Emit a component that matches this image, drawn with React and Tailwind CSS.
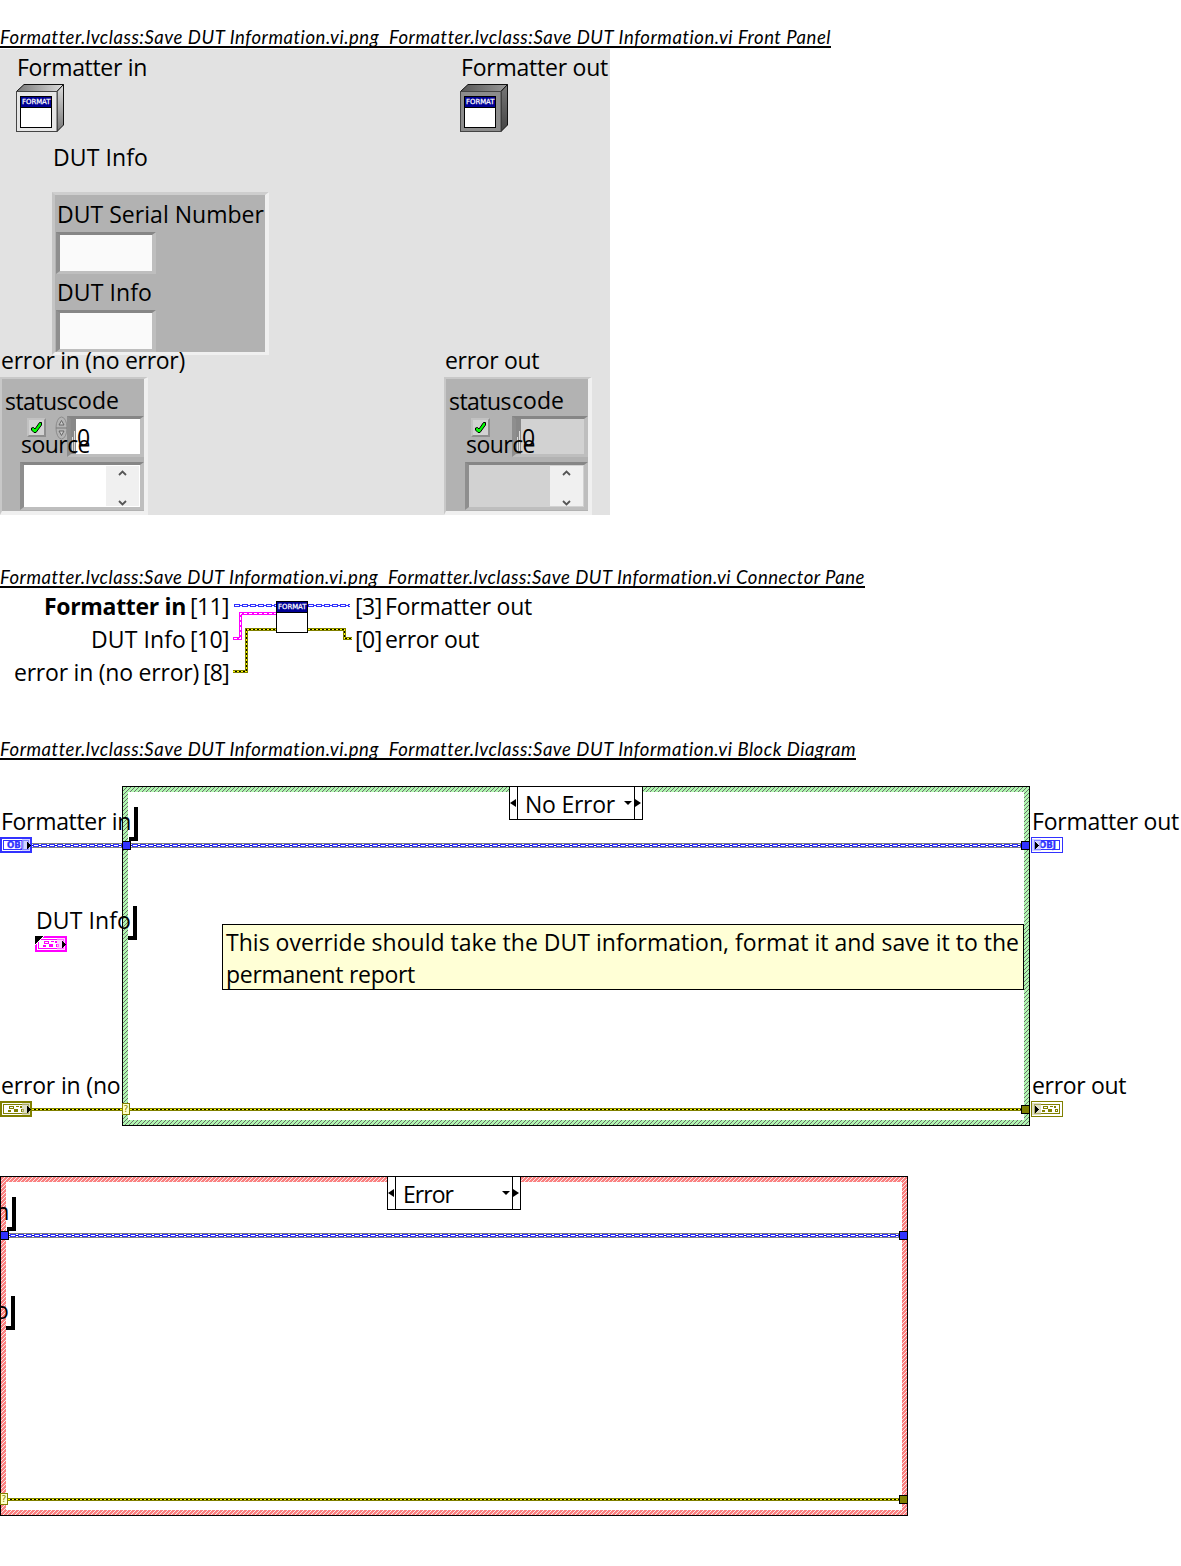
import React, { useLayoutEffect, useRef } from "react";

// Single line of text whose tracking is adjusted so that it fills a given width.
function Fit({ w, className = "", children }) {
  const ref = useRef(null);
  useLayoutEffect(() => {
    const el = ref.current;
    el.style.letterSpacing = "0.01px";
    const natural = el.getBoundingClientRect().width;
    el.style.letterSpacing = `${(w - natural) / el.textContent.length + 0.01}px`;
  }, [w, children]);
  return (
    <span ref={ref} className={`inline-block flex-none self-start whitespace-pre ${className}`}>
      {children}
    </span>
  );
}

function Label({ w, className = "", children }) {
  return (
    <Fit w={w} className={`text-[23px] leading-8 ${className}`}>
      {children}
    </Fit>
  );
}

function Caption({ w, children }) {
  return (
    <h2 className="h-6 overflow-hidden">
      <span className="inline-block h-[23px] overflow-hidden border-b-2 border-black align-top">
        <Fit w={w} className="font-['Lato',sans-serif] text-[18.5px] italic leading-[25px]">
          {children}
        </Fit>
      </span>
    </h2>
  );
}

function FormatBadge({ x, y }) {
  return (
    <g>
      <rect x={x + 0.5} y={y + 0.5} width="31" height="31" fill="#fff" stroke="#000" />
      <rect x={x + 1} y={y + 1} width="30" height="10" fill="#000094" />
      <rect x={x} y={y + 11} width="32" height="1" fill="#000" />
      <text x={x + 2} y={y + 8} textLength="28.5" lengthAdjust="spacingAndGlyphs" fill="#fff" stroke="#fff" strokeWidth=".25" fontSize="7" fontFamily="DejaVu Sans">
        FORMAT
      </text>
    </g>
  );
}

function Cube({ dark }) {
  const id = dark ? "cube-dark" : "cube-light";
  return (
    <svg className="mt-px" width="48" height="48">
      <defs>
        <linearGradient id={id} x1="0" x2="1" y1="0" y2="0">
          <stop offset="0" stopColor={dark ? "#555" : "#777"} />
          <stop offset="1" stopColor={dark ? "#999" : "#ddd"} />
        </linearGradient>
        <linearGradient id={`${id}-side`} x1="0" x2="0" y1="0" y2="1">
          <stop offset="0" stopColor={dark ? "#777" : "#ddd"} />
          <stop offset="1" stopColor={dark ? "#444" : "#777"} />
        </linearGradient>
      </defs>
      <path d="M.5 7.5 8 .5h39.500L41 7.500z" fill={`url(#${id})`} stroke="#111" />
      <path d="M41 7.500 47.500 .5V41L41 47.500z" fill={`url(#${id}-side)`} stroke="#111" />
      <rect x=".5" y="7.500" width="40.500" height="40" fill={dark ? "#8c8c8c" : "#e6e6e6"} stroke="#444" />
      <FormatBadge x={4} y={12} />
    </svg>
  );
}

const SUNKEN = "border-[3px] border-l-4 border-r-4 border-t-[#868686] border-l-[#8e8e8e] border-r-[#bebebe] border-b-[#bebebe]";

function Check() {
  return (
    <div className="mt-[2px] h-[19px] w-[19px] flex-none border-2 border-t-[#c2c2c2] border-l-[#c2c2c2] border-r-[#8e8e8e] border-b-[#8e8e8e] bg-[#d2d2d2]">
      <svg width="15" height="15">
        <path d="M2.500 8 4.500 7.500 6 9 10.500 2.500 12.500 2.500v2.500L7 12.500H5L2.500 10z" fill="#0f0" stroke="#000" />
      </svg>
    </div>
  );
}

function Spinner() {
  return (
    <svg className="ml-[9px] flex-none" width="13" height="24">
      <ellipse cx="6.500" cy="12" rx="5.500" ry="11" fill="#b4b4b4" stroke="#8c8c8c" />
      <path d="M1 12h11" stroke="#777" />
      <path d="M4 9 6.500 4.500 9 9z" fill="#ccc" stroke="#666" />
      <path d="M4 15h5L6.500 19.500z" fill="#ccc" stroke="#666" />
    </svg>
  );
}

function ErrorCluster({ out }) {
  const fill = out ? "bg-[#d2d2d2]" : "bg-white";
  return (
    <div className="mt-px flex h-[138px] w-[148px] flex-col border-t-2 border-r-4 border-b-4 border-l-2 border-t-[#c8c8c8] border-r-[#f0f0f0] border-b-[#f0f0f0] border-l-[#c8c8c8] bg-[#b2b2b2] pt-[5px]">
      <div className={`flex h-8 pl-[3px] ${out ? "gap-px" : ""}`}>
        <Label w={62} className="mt-px">status</Label>
        <Label w={52}>code</Label>
      </div>
      <div className="flex h-[41px] items-start pl-[25px]">
        <Check />
        {!out && <Spinner />}
        <div className={`flex h-[41px] flex-none ${SUNKEN} ${fill} ${out ? "ml-[22px] w-[76px]" : "-ml-px w-[77px]"}`}>
          <svg className="bg-[#888]" width="5" height="35">
            <path d="M3.500 12v20M1.500 18v14" stroke="#ddd" />
          </svg>
          <Label w={13} className="ml-px mt-[2px]">0</Label>
        </div>
      </div>
      <Label w={69} className={`relative -mt-[29px] mb-px ${out ? "ml-5" : "ml-[19px]"}`}>source</Label>
      <div className={`mt-px flex h-12 justify-end ${SUNKEN} ${fill} ${out ? "ml-[19px] w-[123px]" : "ml-[18px] w-[124px]"}`}>
        <div className="my-px mr-px flex w-[33px] flex-col items-center justify-between bg-[#f0f0f0] pt-1">
          <svg width="9" height="6"><path d="M1 5 4.500 1.500 8 5" fill="none" stroke="#555" strokeWidth="1.800" /></svg>
          <svg width="9" height="6"><path d="M1 1 4.500 4.500 8 1" fill="none" stroke="#555" strokeWidth="1.800" /></svg>
        </div>
      </div>
    </div>
  );
}

function FrontPanel() {
  return (
    <div className="flex h-[466px] w-[610px] flex-col overflow-hidden bg-[#e2e2e2] pt-[2px]">
      <div className="flex pl-4">
        <div className="flex w-[444px] flex-col">
          <Label w={130} className="ml-px">Formatter in</Label>
          <Cube />
        </div>
        <div className="flex flex-col">
          <Label w={147} className="ml-px">Formatter out</Label>
          <Cube dark />
        </div>
      </div>
      <Label w={95} className="mt-[9px] ml-[53px]">DUT Info</Label>
      <div className="mt-[19px] ml-[52px] flex h-[163px] w-[217px] flex-none flex-col border-[3px] border-r-4 border-t-[#cecece] border-r-[#f0f0f0] border-b-[#f0f0f0] border-l-[#c4c4c4] bg-[#b2b2b2] pt-[3px] pl-px">
        <Label w={207} className="ml-px">DUT Serial Number</Label>
        <div className={`mt-[2px] h-[42px] w-[100px] bg-[#fafafa] ${SUNKEN}`} />
        <Label w={95} className="mt-[2px] ml-px">DUT Info</Label>
        <div className={`mt-[2px] h-[42px] w-[100px] bg-[#fafafa] ${SUNKEN}`} />
      </div>
      <div className="-mt-[11px] flex">
        <div className="flex w-[444px] flex-col">
          <Label w={184} className="ml-px">error in (no error)</Label>
          <ErrorCluster />
        </div>
        <div className="flex flex-col">
          <Label w={94} className="ml-px">error out</Label>
          <ErrorCluster out />
        </div>
      </div>
    </div>
  );
}

function ConnectorPane() {
  return (
    <div className="flex h-[106px] text-[23px] leading-[33px]">
      <div className="flex w-[229px] flex-col items-end pt-px">
        <div className="flex gap-1"><Fit w={142} className="font-bold">Formatter in</Fit><Fit w={39}>[11]</Fit></div>
        <div className="flex gap-1"><Fit w={95}>DUT Info</Fit><Fit w={39}>[10]</Fit></div>
        <div className="flex gap-1"><Fit w={185}>error in (no error)</Fit><Fit w={26}>[8]</Fit></div>
      </div>
      <svg width="126" height="100" viewBox="229 589 126 100" shapeRendering="crispEdges" fill="none">
        <path d="M234 605.500H276M308 605.500H350" stroke="#3232ff" />
        <path d="M234 605.500H276M308 605.500H350" stroke="#3232ff" strokeWidth="3" strokeDasharray="6 2" />
        <path d="M235 605.500H276M309 605.500H350" stroke="#fff" strokeDasharray="4 4" />
        <path d="M233 638.500H240.500V613.500H276" stroke="#f0f" strokeWidth="3" />
        <path d="M234 638.500H240.500V613.500H276" stroke="#fff" strokeDasharray="3 2" />
        <path d="M233 671.500H246.500V629.500H276M308 629.500H344.500V638.500H352" stroke="#808000" strokeWidth="3" />
        <path d="M233 671.500H246.500V629.500H276M308 629.500H344.500V638.500H352" stroke="#ff0" strokeDasharray="2 2" />
        <path d="M235 671.500H246.500V629.500H276M310 629.500H344.500V638.500H352" stroke="#000" strokeDasharray="2 2" />
        <FormatBadge x={276} y={601} />
      </svg>
      <div className="flex flex-col items-start pt-px">
        <div className="flex gap-[3px]"><Fit w={27}>[3]</Fit><Fit w={147}>Formatter out</Fit></div>
        <div className="flex gap-[3px]"><Fit w={27}>[0]</Fit><Fit w={94}>error out</Fit></div>
      </div>
    </div>
  );
}

// Terminal glyph of a control (thick frame, arrow right) or an indicator (thin frame, arrow left).
function Terminal({ color, tint, indicator, obj, corner, className = "" }) {
  const dx = indicator ? 3 : 0;
  return (
    <svg className={`flex-none ${className}`} width="32" height="16" shapeRendering="crispEdges">
      {indicator ? (
        <rect x=".5" y=".5" width="31" height="15" fill="#fff" stroke={color} />
      ) : (
        <rect x="1" y="1" width="30" height="14" fill="#fff" stroke={color} strokeWidth="2" />
      )}
      <rect x="3.500" y="3.500" width="25" height="9" fill="#fff" stroke={color} />
      {obj ? (
        <text x={indicator ? 8 : 7} y="11" textLength="17" lengthAdjust="spacingAndGlyphs" fontSize="8" fontWeight="700" fontFamily="DejaVu Sans" fill={color} stroke={color} strokeWidth=".3">OBJ</text>
      ) : (
        <g fill={color} transform={`translate(${dx - 1} 0)`}>
          <path d="M10 5h5v3h-5zM11 6v1h3V6z" fillRule="evenodd" />
          <rect x="17" y="5" width="3" height="1" />
          <rect x="21" y="5" width="2" height="2" />
          <rect x="9" y="9" width="3" height="2" />
          <rect x="15" y="8" width="4" height="3" />
          <path d="M22 8h3v3h-3zM23 9v1h1V9z" fillRule="evenodd" />
        </g>
      )}
      <rect x={indicator ? 1 : 22} y="2" width={indicator ? 9 : 8} height="12" fill={tint} opacity=".6" />
      <path d={indicator ? "M4 5v7l4-3.500z" : "M27 5v7l4-3.500z"} fill="#000" />
      {corner && (
        <>
          <path d="M0 0h9L0 9z" fill="#fff" />
          <path d="M0 0h8L0 8z" fill="#000" />
        </>
      )}
    </svg>
  );
}

function Hatch({ id, base, line }) {
  return (
    <svg className="absolute inset-0 h-full w-full" shapeRendering="crispEdges">
      <defs>
        <pattern id={id} width="4" height="4" patternUnits="userSpaceOnUse">
          <rect width="4" height="4" fill={base} />
          <path d="M3 0h1v1H3zM2 1h1v1H2zM1 2h1v1H1zM0 3h1v1H0z" fill={line} />
        </pattern>
      </defs>
      <rect width="100%" height="100%" fill={`url(#${id})`} />
    </svg>
  );
}

function CaseFrame({ hatch, className, title, titleWidth }) {
  return (
    <div className={`absolute h-[340px] w-[908px] border border-black p-[5px] ${className}`}>
      {hatch}
      <div className="relative flex h-full items-start justify-center bg-white">
        <div className="-mt-[6px] flex h-[34px] w-[134px] border border-black bg-white">
          <svg className="flex-none" width="8" height="32"><path d="M6 12v8L0 16z" /><path d="M7.500 0v32" stroke="#000" /></svg>
          <Label w={titleWidth} className="ml-[7px] mt-px">{title}</Label>
          <svg className="ml-auto flex-none" width="18" height="32"><path d="M0 14h8L4 18z" /><path d="M10.500 0v32" stroke="#000" /><path d="M11 12v8l6-4z" /></svg>
        </div>
      </div>
    </div>
  );
}

function ObjectWire({ w }) {
  return (
    <svg className="flex-none" width={w} height="5" shapeRendering="crispEdges">
      <path d={`M0 2.500H${w}`} stroke="#808080" strokeWidth="5" />
      <path d={`M0 2.500H${w}`} stroke="#fff" strokeWidth="3" />
      <path d={`M0 2.500H${w}`} stroke="#0000b4" />
      <path d={`M1 2.500H${w}`} stroke="#3232ff" strokeWidth="3" strokeDasharray="6 2" />
      <path d={`M2 2.500H${w}`} stroke="#fff" strokeDasharray="4 4" />
    </svg>
  );
}

function ErrorWire({ w }) {
  return (
    <svg className="flex-none" width={w} height="3" shapeRendering="crispEdges">
      <path d={`M0 1.500H${w}`} stroke="#808000" strokeWidth="3" />
      <path d={`M0 1.500H${w}`} stroke="#ff0" strokeDasharray="2 2" />
      <path d={`M2 1.500H${w}`} stroke="#000" strokeDasharray="2 2" />
    </svg>
  );
}

function Tunnel({ color, className = "" }) {
  return <div className={`h-[9px] w-[9px] flex-none border border-black ${color} ${className}`} />;
}

function Selector() {
  return (
    <div className="-mt-px flex h-3 w-2 flex-none items-center justify-center border border-[#808000] bg-[#ffffc8] font-['DejaVu_Sans',sans-serif] text-[9px] leading-none text-[#808000]">
      ?
    </div>
  );
}

function Bracket({ className }) {
  return <div className={`absolute h-[34px] w-[9px] border-r-4 border-b-4 border-black ${className}`} />;
}

function BlockDiagram() {
  return (
    <div className="relative h-[805px] w-[1181px] overflow-hidden">
      <CaseFrame hatch={<Hatch id="hatch-green" base="#b0f8b0" line="#6c6c6c" />} className="left-[122px] top-[25px]" title="No Error" titleWidth={90} />
      <div className="absolute left-px top-[44px] flex w-[1180px] justify-between">
        <Label w={130}>Formatter in</Label>
        <Label w={147} className="mr-[2px]">Formatter out</Label>
      </div>
      <Bracket className="left-[129px] top-[46px]" />
      <div className="absolute left-0 top-[76px] flex h-[17px] items-center">
        <Terminal obj color="#3232ff" tint="#b8b8ff" className="self-start" />
        <ObjectWire w={90} />
        <Tunnel color="bg-[#3232ff]" />
        <ObjectWire w={890} />
        <Tunnel color="bg-[#3232ff]" />
        <Terminal obj indicator color="#3232ff" tint="#b8b8ff" className="ml-px self-start" />
      </div>

      <div className="absolute left-[35px] top-[143px] flex flex-col">
        <Label w={95} className="ml-px">DUT Info</Label>
        <Terminal corner color="#ff00ff" tint="#ffb0ff" />
      </div>
      <Bracket className="left-[128px] top-[145px]" />

      <p className="absolute left-[222px] top-[163px] flex h-[66px] w-[802px] flex-col border border-black bg-[#ffffd6] pl-[3px] pt-px">
        <Label w={793}>This override should take the DUT information, format it and save it to the</Label>
        <Label w={189}>permanent report</Label>
      </p>

      <div className="absolute left-px top-[308px] flex w-[1180px] justify-between">
        <div className="w-[121px] overflow-hidden">
          <Label w={186}>error in (no error)</Label>
        </div>
        <Label w={94} className="mr-[55px]">error out</Label>
      </div>
      <div className="absolute left-0 top-[340px] flex h-[17px] items-center">
        <Terminal color="#808000" tint="#c8c8a0" className="self-start" />
        <ErrorWire w={90} />
        <Selector />
        <ErrorWire w={891} />
        <Tunnel color="bg-[#808000]" />
        <Terminal indicator color="#808000" tint="#c8c8a0" className="ml-px self-start" />
      </div>

      <CaseFrame hatch={<Hatch id="hatch-red" base="#fb8080" line="#f4eaea" />} className="left-0 top-[415px]" title="Error" titleWidth={50} />
      <Label w={130} className="absolute left-[-121px] top-[434px]">Formatter in</Label>
      <Bracket className="left-[7px] top-[436px]" />
      <div className="absolute left-0 top-[470px] flex items-center">
        <Tunnel color="bg-[#3232ff]" />
        <ObjectWire w={890} />
        <Tunnel color="bg-[#3232ff]" />
      </div>
      <Label w={95} className="absolute left-[-86px] top-[533px]">DUT Info</Label>
      <Bracket className="left-[6px] top-[535px]" />
      <div className="absolute left-0 top-[730px] flex h-[17px] items-center">
        <Selector />
        <ErrorWire w={891} />
        <Tunnel color="bg-[#808000]" />
      </div>
    </div>
  );
}

export default function App() {
  return (
    <main className="min-h-[1566px] w-[1181px] overflow-hidden bg-white pt-[25px] font-['Open_Sans','Noto_Sans',sans-serif] text-black">
      <section className="h-[540px]">
        <Caption w={831}>Formatter.lvclass:Save DUT Information.vi.png  Formatter.lvclass:Save DUT Information.vi Front Panel</Caption>
        <FrontPanel />
      </section>
      <section className="h-[172px]">
        <Caption w={865}>Formatter.lvclass:Save DUT Information.vi.png  Formatter.lvclass:Save DUT Information.vi Connector Pane</Caption>
        <ConnectorPane />
      </section>
      <section>
        <Caption w={856}>Formatter.lvclass:Save DUT Information.vi.png  Formatter.lvclass:Save DUT Information.vi Block Diagram</Caption>
        <BlockDiagram />
      </section>
    </main>
  );
}
